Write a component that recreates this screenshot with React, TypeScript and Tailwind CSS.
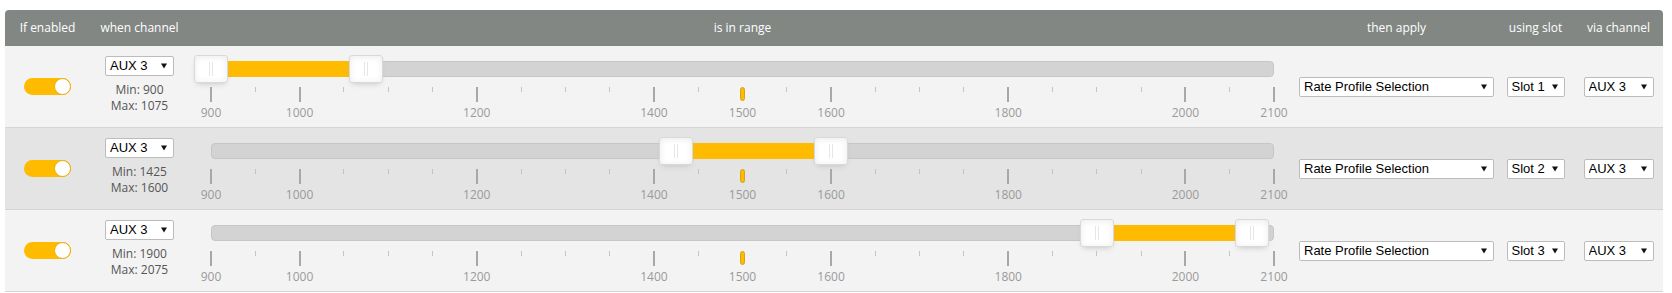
import type { ReactNode } from 'react'

const MIN = 900
const MAX = 2100
const TRACK_W = 1063
const CURRENT = 1500
const MAJOR = [900, 1000, 1200, 1400, 1600, 1800, 2000, 2100]

const cols = 'grid grid-cols-[85px_99px_1107px_201px_77px_89px]'

const rows = [
  { min: 900, max: 1075, slot: 'Slot 1', bg: 'bg-[#f3f3f3]' },
  { min: 1425, max: 1600, slot: 'Slot 2', bg: 'bg-[#e4e4e4]' },
  { min: 1900, max: 2075, slot: 'Slot 3', bg: 'bg-[#f3f3f3]' },
]

function px(v: number) {
  return ((v - MIN) / (MAX - MIN)) * TRACK_W
}

function Select({ value, width }: { value: string; width: string }) {
  return (
    <div className={`relative ${width}`}>
      <select
        defaultValue={value}
        className="block h-[20px] w-full appearance-none rounded-[2px] border border-[#bcbcbc] bg-white pl-[4px] font-['Liberation_Sans',Arial,sans-serif] text-[13px] leading-[18px] text-black outline-none"
      >
        <option>{value}</option>
      </select>
      <svg
        className="pointer-events-none absolute right-[7px] top-1/2 -translate-y-1/2"
        width="6"
        height="6"
        viewBox="0 0 6 6"
      >
        <polygon points="0,0.5 6,0.5 3,5.5" fill="#111" />
      </svg>
    </div>
  )
}

function Toggle() {
  return (
    <div className="flex h-[17px] w-[47px] justify-end rounded-full bg-[#ffbb00]">
      <div className="h-[17px] w-[17px] rounded-full border border-[#e9ab0c] bg-white" />
    </div>
  )
}

function Handle({ x }: { x: number }) {
  return (
    <div
      className="absolute top-[-7px] h-[28px] w-[34px] rounded-[3px] border border-[#d9d9d9] bg-white shadow-[inset_0_1px_7px_#ebebeb,0_3px_6px_-3px_#bbb]"
      style={{ left: x - 18 }}
    >
      <div className="absolute left-[14px] top-[6px] h-[14px] w-px bg-[#e8e7e6]" />
      <div className="absolute left-[17px] top-[6px] h-[14px] w-px bg-[#e8e7e6]" />
    </div>
  )
}

function RangeSlider({ min, max }: { min: number; max: number }) {
  const ticks: number[] = []
  for (let v = MIN; v <= MAX; v += 50) ticks.push(v)
  return (
    <div className="px-[22px] pt-[15px]">
      <div className="relative h-[16px] rounded-[4px] border border-[#c6c6c6] bg-[#d3d3d3]">
        <div
          className="absolute top-[-1px] bottom-[-1px] bg-[#ffbb00]"
          style={{ left: px(min), width: px(max) - px(min) }}
        />
        <Handle x={px(min)} />
        <Handle x={px(max)} />
      </div>
      <div className="relative mt-[10px] h-[40px]">
        {ticks.map((v) => {
          if (v === CURRENT) {
            return (
              <div
                key={v}
                className="absolute top-0 h-[14px] w-[5px] rounded-full border border-[#d9a21b] bg-[#ffbb00]"
                style={{ left: px(v) - 2.5 }}
              />
            )
          }
          const major = MAJOR.includes(v)
          return (
            <div
              key={v}
              className={major ? 'absolute top-0 h-[15px] w-[2px] bg-[#a8a8a8]' : 'absolute top-0 h-[5px] w-px bg-[#c4c4c4]'}
              style={{ left: px(v) - (major ? 1 : 0.5) }}
            />
          )
        })}
        {[...MAJOR, CURRENT].map((v) => (
          <div
            key={`l${v}`}
            className="absolute top-[19px] w-[40px] text-center text-[12px] leading-[14px] text-[#9a9a9a]"
            style={{ left: px(v) - 20 }}
          >
            {v}
          </div>
        ))}
      </div>
    </div>
  )
}

function Cell({ children, className = '' }: { children: ReactNode; className?: string }) {
  return <div className={`flex items-center justify-center ${className}`}>{children}</div>
}

export default function App() {
  return (
    <div className="min-h-screen bg-white pl-[5px] pt-[10px] font-['Open_Sans',sans-serif]">
      <div className="w-[1658px]">
        <div className={`${cols} h-[36px] rounded-t-[4px] bg-[#828784] text-[12px] text-white`}>
          <Cell>If enabled</Cell>
          <Cell>when channel</Cell>
          <Cell>is in range</Cell>
          <Cell>then apply</Cell>
          <Cell>using slot</Cell>
          <Cell>via channel</Cell>
        </div>
        {rows.map((r, i) => (
          <div key={i} className={`${cols} h-[82px] border-b border-[#d5d5d5] ${r.bg}`}>
            <Cell>
              <Toggle />
            </Cell>
            <div className="flex flex-col items-center pt-[10px]">
              <Select value="AUX 3" width="w-[69px]" />
              <div className="mt-[6px] text-center text-[12px] leading-[16px] text-[#555]">
                <div>Min: {r.min}</div>
                <div>Max: {r.max}</div>
              </div>
            </div>
            <RangeSlider min={r.min} max={r.max} />
            <Cell>
              <Select value="Rate Profile Selection" width="w-[195px]" />
            </Cell>
            <Cell>
              <Select value={r.slot} width="w-[58px]" />
            </Cell>
            <Cell>
              <Select value="AUX 3" width="w-[70px]" />
            </Cell>
          </div>
        ))}
      </div>
    </div>
  )
}
